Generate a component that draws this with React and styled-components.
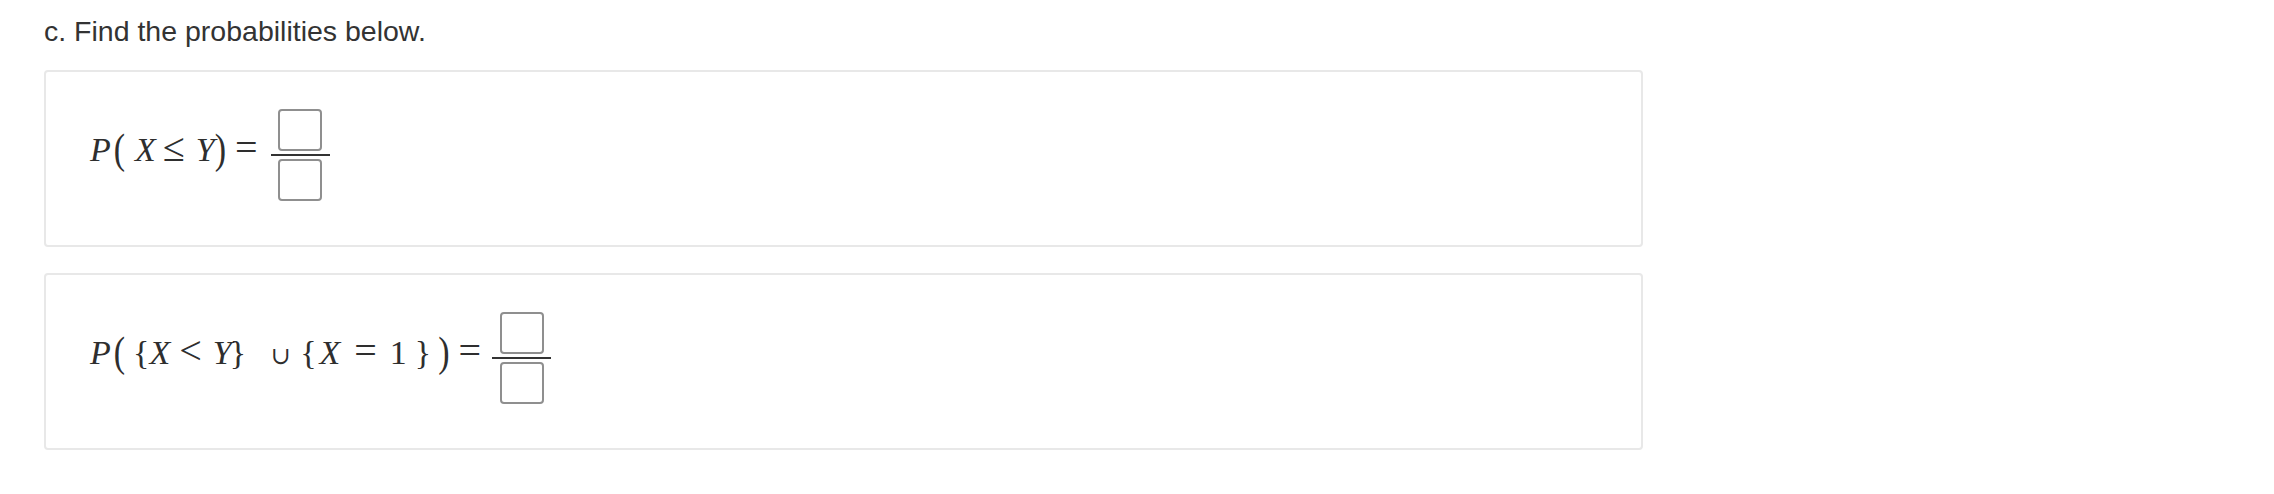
import React from 'react'
import styled, { createGlobalStyle } from 'styled-components'

const Global = createGlobalStyle`
  html, body { margin: 0; padding: 0; background: #fff; }
  body { font-family: "Liberation Sans", Arial, sans-serif; color: #333; }
`

const Page = styled.div`
  padding: 15px 0 0 44px;
  width: 1599px;
`

const Prompt = styled.p`
  margin: 0 0 23px;
  font-size: 28.5px;
  line-height: 32px;
  color: #333;
`

const Card = styled.div`
  box-sizing: border-box;
  height: 177px;
  border: 2px solid #e8e8e8;
  border-radius: 4px;
  padding: 37px 44px 44px;
  margin-bottom: 26px;
`

const Row = styled.div`
  display: flex;
  align-items: center;
  font-family: "Liberation Serif", "Times New Roman", serif;
  font-size: 34px;
  color: #2e2e2e;
`

const Sym = styled.span`
  display: inline-block;
  line-height: 1;
  padding-bottom: 10px;
  margin-left: ${p => p.$gap || 0}px;
  font-style: ${p => (p.$italic ? 'italic' : 'normal')};
`

const Rel = styled.span`
  display: inline-block;
  font-size: 40px;
  line-height: 30px;
  padding-bottom: 14px;
  margin-left: ${p => p.$gap || 0}px;
`

const Cup = styled.span`
  display: inline-block;
  font-family: "DejaVu Serif", serif;
  font-size: 24px;
  line-height: 1;
  padding-bottom: 4px;
  margin-left: ${p => p.$gap || 0}px;
`

const Delim = styled(Sym)`
  transform: scaleY(1.22);
  transform-origin: 50% 40%;
`

const Fraction = styled.span`
  display: inline-flex;
  flex-direction: column;
  align-items: center;
  margin-left: ${p => p.$gap || 0}px;
  gap: 3px;
`

const Bar = styled.span`
  display: block;
  width: 59px;
  height: 2px;
  background: #333;
`

const Blank = styled.input`
  box-sizing: border-box;
  width: 44px;
  height: 42px;
  margin: 0;
  padding: 0;
  border: 2px solid #8f8f8f;
  border-radius: 4px;
  background: #fff;
  outline: none;
`

const Answer = ({ gap }) => (
  <Fraction $gap={gap}>
    <Blank type="text" aria-label="numerator" />
    <Bar />
    <Blank type="text" aria-label="denominator" />
  </Fraction>
)

const App = () => (
  <Page>
    <Global />
    <Prompt>c. Find the probabilities below.</Prompt>

    <Card>
      <Row>
        <Sym $italic>P</Sym>
        <Delim $gap={3}>(</Delim>
        <Sym $italic $gap={10}>X</Sym>
        <Rel $gap={7}>≤</Rel>
        <Sym $italic $gap={11}>Y</Sym>
        <Delim $gap={0}>)</Delim>
        <Rel $gap={9}>=</Rel>
        <Answer gap={13} />
      </Row>
    </Card>

    <Card>
      <Row>
        <Sym $italic>P</Sym>
        <Delim $gap={3}>(</Delim>
        <Sym $gap={8}>{'{'}</Sym>
        <Sym $italic $gap={0}>X</Sym>
        <Rel $gap={9}>&lt;</Rel>
        <Sym $italic $gap={11}>Y</Sym>
        <Sym $gap={-2}>{'}'}</Sym>
        <Cup $gap={25}>∪</Cup>
        <Sym $gap={9}>{'{'}</Sym>
        <Sym $italic $gap={3}>X</Sym>
        <Rel $gap={14}>=</Rel>
        <Sym $gap={13}>1</Sym>
        <Sym $gap={8}>{'}'}</Sym>
        <Delim $gap={7}>)</Delim>
        <Rel $gap={9}>=</Rel>
        <Answer gap={11} />
      </Row>
    </Card>
  </Page>
)

export default App
